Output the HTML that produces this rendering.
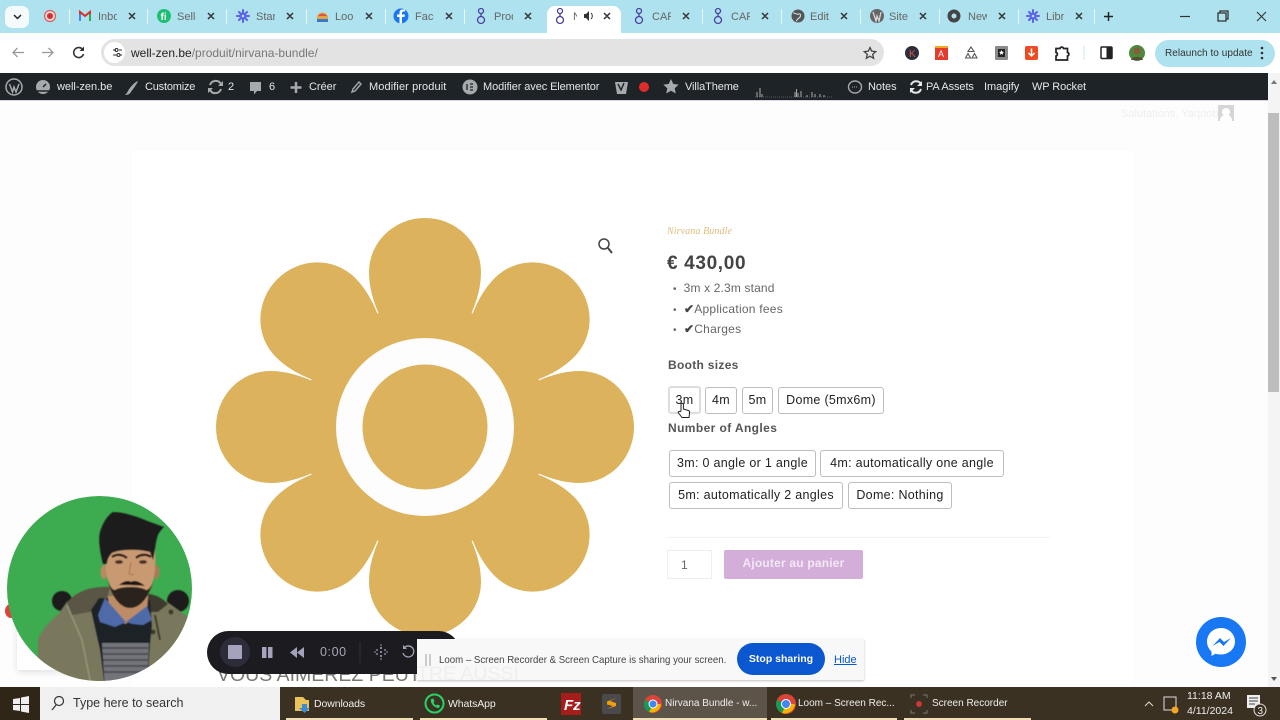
<!DOCTYPE html>
<html><head><meta charset="utf-8"><title>Nirvana Bundle</title>
<style>
html,body{margin:0;padding:0;width:1280px;height:720px;overflow:hidden;background:#fdfdfe}
body{font-family:"Liberation Sans",sans-serif;position:relative;color:#333}
.a{position:absolute;white-space:nowrap}
.t{position:absolute;top:10px;font-size:11px;color:#666;width:19px;overflow:hidden;white-space:nowrap;line-height:14px}
.sep{position:absolute;top:9px;width:1px;height:15px;background:#e8f6fa}
.ad{position:absolute;top:80px;font-size:11px;line-height:15px;color:#e6e7e8;white-space:nowrap;letter-spacing:-.03px}
.opt{position:absolute;box-sizing:border-box;border:1px solid #bdbdbd;border-radius:3px;background:#fff;font-size:12.5px;color:#222;text-align:center;white-space:nowrap;height:27px;line-height:24px;letter-spacing:.3px}
.tb{position:absolute;top:697px;font-size:10.5px;line-height:14px;color:#eee;white-space:nowrap}
.ul{position:absolute;top:718px;height:2px;background:#f0dfb4}
</style></head><body>

<!-- tab strip -->
<div class="a" style="left:0;top:0;width:1280px;height:33px;background:#aee2ee"></div>
<div class="a" style="left:5px;top:6px;width:24px;height:22px;background:#f5fbfd;border-radius:7px"></div>
<div class="a" style="left:547px;top:6px;width:74px;height:27px;background:#fff;border-radius:8px 8px 0 0"></div>
<div class="sep" style="left:69px"></div><div class="sep" style="left:147px"></div><div class="sep" style="left:226px"></div><div class="sep" style="left:306px"></div><div class="sep" style="left:385px"></div><div class="sep" style="left:464px"></div><div class="sep" style="left:702px"></div><div class="sep" style="left:781px"></div><div class="sep" style="left:860px"></div><div class="sep" style="left:939px"></div><div class="sep" style="left:1018px"></div><div class="sep" style="left:1094px"></div>
<div class="t" style="left:98px">Inbox</div><div class="t" style="left:177px">Seller</div><div class="t" style="left:256px">Start</div><div class="t" style="left:335px">Loom</div><div class="t" style="left:415px">Face</div><div class="t" style="left:494px">Prod</div><div class="t" style="left:573px;width:4px">N</div><div class="t" style="left:652px">CAR</div><div class="t" style="left:731px">CAR</div><div class="t" style="left:810px">Edit</div><div class="t" style="left:889px">Site</div><div class="t" style="left:968px">New</div><div class="t" style="left:1046px">Libr</div>

<svg class="a" style="left:0;top:0" width="1280" height="105" viewBox="0 0 1280 105">
 <path d="M14 15l3.500 3.500L21 15" fill="none" stroke="#222" stroke-width="1.500"/>
 <circle cx="50" cy="16" r="5.500" fill="#f3d6d6" stroke="#d9605c" stroke-width="1.200"/><circle cx="50" cy="16" r="3" fill="#d32f2f"/>
 <path d="M80 21V12l5 4 5-4v9" fill="none" stroke="#d93025" stroke-width="2"/><path d="M80 14v7" stroke="#4285f4" stroke-width="2"/><path d="M90 14v7" stroke="#34a853" stroke-width="2"/>
 <circle cx="164" cy="16" r="7" fill="#1dbf73"/><text x="160.500" y="20" font-size="10" font-weight="bold" fill="#fff" font-family="Liberation Sans">fi</text>
 <g stroke="#5b63e8" stroke-width="2" stroke-linecap="round"><path d="M243 10v12M237 16h12M239 12l8 8M247 12l-8 8"/></g><circle cx="243" cy="16" r="3.500" fill="#5b63e8"/><circle cx="243" cy="16" r="1.300" fill="#aee2ee"/>
 <path d="M317 22v-4a5 5 0 0 1 11 0v4z" fill="#e8a33d"/><path d="M317 22v-3h11v3z" fill="#3b78c9"/><path d="M318 16a5 4 0 0 1 9 0z" fill="#d9534f"/>
 <circle cx="401" cy="16" r="7.500" fill="#1877f2"/><path d="M402 23.400v-6.400h2.500l.5-2.500h-3V13c0-1 .5-1.500 1.500-1.500H405V9.500h-2.500c-2 0-3 1.300-3 3.200v1.800H397V17h2.500v6.400z" fill="#fff"/>
 <g fill="none" stroke="#4a3f9f" stroke-width="1.300"><circle cx="481" cy="11" r="2.500"/><circle cx="560" cy="11" r="2.500"/><circle cx="639" cy="11" r="2.500"/><circle cx="718" cy="11" r="2.500"/><path d="M481 14v3M560 14v3M639 14v3M718 14v3"/><circle cx="481" cy="20" r="3.500"/><circle cx="560" cy="20" r="3.500"/><circle cx="639" cy="20" r="3.500"/><circle cx="718" cy="20" r="3.500"/></g>
 <path d="M584 14h2l3-3v10l-3-3h-2z" fill="#333"/><path d="M591 13a4 4 0 0 1 0 6" fill="none" stroke="#333"/>
 <circle cx="798" cy="16" r="6.500" fill="#555"/><path d="M793 13c3 0 4 2 6 1s2 3 0 4-2 3-3 3" fill="none" stroke="#cfe9ef"/>
 <circle cx="877" cy="16" r="7" fill="#666"/><path d="M873 12l3 9 1-5 2 5 2-9" fill="none" stroke="#ddd" stroke-width="1.200"/>
 <circle cx="954" cy="16" r="6.500" fill="#444"/><circle cx="954" cy="16" r="2.500" fill="#aee2ee"/>
 <g stroke="#5b63e8" stroke-width="2" stroke-linecap="round"><path d="M1033 10v12M1027 16h12M1029 12l8 8M1037 12l-8 8"/></g><circle cx="1033" cy="16" r="3.500" fill="#5b63e8"/><circle cx="1033" cy="16" r="1.300" fill="#aee2ee"/>
 <path d="M1104 16.500h9M1108.500 12v9" stroke="#222" stroke-width="1.500"/>
 <path d="M1180 16.500h10" stroke="#333" stroke-width="1.200"/>
 <path d="M1218 13h8v8h-8zM1220 13v-2h8v8h-2" fill="none" stroke="#333" stroke-width="1.300"/>
 <path d="M1257 12l9 9M1266 12l-9 9" stroke="#333" stroke-width="1.100"/>
 <g stroke="#333" stroke-width="1.500"><path d="M129 13l6 6M135 13l-6 6M208 13l6 6M214 13l-6 6M287 13l6 6M293 13l-6 6M366 13l6 6M372 13l-6 6M446 13l6 6M452 13l-6 6M525 13l6 6M531 13l-6 6M604 13l6 6M610 13l-6 6M683 13l6 6M689 13l-6 6M762 13l6 6M768 13l-6 6M841 13l6 6M847 13l-6 6M920 13l6 6M926 13l-6 6M999 13l6 6M1005 13l-6 6M1076 13l6 6M1082 13l-6 6"/></g>
</svg>

<!-- toolbar -->
<div class="a" style="left:0;top:33px;width:1280px;height:40px;background:#fff"></div>
<div class="a" style="left:101px;top:39px;width:783px;height:27px;background:#e3e3e3;border-radius:14px"></div>
<div class="a" style="left:104px;top:42px;width:21px;height:21px;background:#fff;border-radius:50%"></div>
<div class="a" style="left:131px;top:46px;font-size:12px;line-height:15px;color:#777"><span style="color:#222">well-zen.be</span>/produit/nirvana-bundle/</div>
<div class="a" style="left:1155px;top:40px;width:120px;height:27px;background:#aee2ee;border-radius:14px"></div>
<div class="a" style="left:1165px;top:46px;font-size:10px;line-height:15px;color:#333;letter-spacing:.05px">Relaunch to update</div>
<svg class="a" style="left:0;top:33px" width="1280" height="40" viewBox="0 33 1280 40">
 <path d="M24 52.500H13M17.500 48l-4.500 4.500 4.500 4.500" fill="none" stroke="#999" stroke-width="1.300"/>
 <path d="M42 52.500h11M48.500 48l4.500 4.500-4.500 4.500" fill="none" stroke="#999" stroke-width="1.300"/>
 <path d="M83 50a5 5 0 1 0 .5 4" fill="none" stroke="#333" stroke-width="1.600"/><path d="M84 46.500v4.500h-4.500z" fill="#333"/>
 <g stroke="#333" stroke-width="1.100" fill="none"><path d="M113 50h3M119 50h3M113 55h4M120 55h2"/><circle cx="116.500" cy="50" r="1.500"/><circle cx="118.500" cy="55" r="1.500"/></g>
 <path d="M870 47.500l1.700 3.700 4 .4-3 2.700.9 4-3.600-2.100-3.600 2.100.9-4-3-2.700 4-.4z" fill="none" stroke="#444" stroke-width="1.300"/>
 <circle cx="912" cy="53" r="7" fill="#2c2f3a"/><text x="909" y="57" font-size="10" fill="#d9534f" font-family="Liberation Sans">K</text>
 <rect x="935" y="46" width="13" height="14" fill="#e53b2c"/><rect x="935" y="46" width="13" height="2" fill="#f5a623"/><text x="938" y="57" font-size="9" fill="#fff" font-family="Liberation Sans">A</text>
 <path d="M971 47l3 4.500h-6zM965.500 58l2.500-4.500 2.500 4.500zM977 58h-5l2.500-4.500z" fill="none" stroke="#555" stroke-width="1.100"/>
 <rect x="995" y="46" width="13" height="14" rx="1" fill="#8a8a8a"/><rect x="998" y="49" width="7" height="8" fill="#222"/><path d="M1001.500 50l.8 1.800 1.700.2-1.300 1.100.4 1.700-1.600-.9-1.600.9.400-1.700-1.300-1.100 1.700-.2z" fill="#fff"/>
 <rect x="1025" y="46" width="13" height="14" rx="2" fill="#ee4b22"/><path d="M1031.500 48.500v7M1028.500 53l3 3 3-3" fill="none" stroke="#fff" stroke-width="1.500"/>
 <path d="M1056 48.500h4a1.800 1.800 0 0 1 3.500 0h4v4a1.800 1.800 0 0 1 0 3.500v4h-11.500v-4a1.800 1.800 0 0 0 0-3.500z" fill="none" stroke="#222" stroke-width="1.700"/>
 <path d="M1084 46v14" stroke="#cfe4e8"/>
 <rect x="1101" y="47" width="11" height="11.500" rx="1" fill="#fff" stroke="#222" stroke-width="1.500"/><rect x="1106.500" y="47" width="5.500" height="11.500" fill="#222"/>
 <circle cx="1137" cy="53" r="8" fill="#4a8a3a"/><circle cx="1137" cy="51" r="3.500" fill="#8a5a3a"/><path d="M1131 60c1-4 11-4 12 0z" fill="#5a4a3a"/>
 <circle cx="1262" cy="48" r="1.300" fill="#333"/><circle cx="1262" cy="53" r="1.300" fill="#333"/><circle cx="1262" cy="58" r="1.300" fill="#333"/>
</svg>

<!-- admin bar -->
<div class="a" style="left:0;top:73px;width:1268px;height:27px;background:#1d2327"></div>
<div class="a" style="left:0;top:100px;width:1268px;height:1px;background:#d8d6e6"></div>
<div class="ad" style="left:57px">well-zen.be</div>
<div class="ad" style="left:145px;letter-spacing:-.2px">Customize</div>
<div class="ad" style="left:228px">2</div>
<div class="ad" style="left:269px">6</div>
<div class="ad" style="left:309px">Créer</div>
<div class="ad" style="left:369px;letter-spacing:.1px">Modifier produit</div>
<div class="ad" style="left:483px;letter-spacing:-.1px">Modifier avec Elementor</div>
<div class="ad" style="left:685px;letter-spacing:-.1px">VillaTheme</div>
<div class="ad" style="left:868px">Notes</div>
<div class="ad" style="left:926px;letter-spacing:-.1px">PA Assets</div>
<div class="ad" style="left:984px">Imagify</div>
<div class="ad" style="left:1032px;letter-spacing:-.1px">WP Rocket</div>
<svg class="a" style="left:0;top:74px" width="1280" height="26" viewBox="0 73 1280 26">
 <circle cx="14" cy="86" r="8" fill="none" stroke="#a7aaad" stroke-width="1.500"/><path d="M9.500 83l3 8 1.500-5 2 5 3-8" fill="none" stroke="#a7aaad" stroke-width="1.500"/>
 <circle cx="43" cy="86" r="7" fill="#a7aaad"/><path d="M43 86l3-3" stroke="#1d2327" stroke-width="1.500"/><path d="M37 90h12" stroke="#1d2327" stroke-width="1.500"/>
 <path d="M138 80c-3 1-8 6-10 10-1 2-2 3-3 4 3 0 5-1 6-3 2-3 6-8 7-11z" fill="#a7aaad"/>
 <path d="M221 83a6 6 0 0 0-11 1M210 89a6 6 0 0 0 11-1" fill="none" stroke="#a7aaad" stroke-width="2"/><path d="M223 80v5h-5zM208 92v-5h5z" fill="#a7aaad"/>
 <path d="M250 81h11v9h-4l-3 3.500V90h-4z" fill="#a7aaad"/>
 <path d="M296 81v11M290.500 86.500h11" stroke="#a7aaad" stroke-width="2.500"/>
 <path d="M352 91l1-3 6-7 2 2-6 7z" fill="none" stroke="#a7aaad" stroke-width="1.400"/>
 <circle cx="470" cy="86" r="7.500" fill="#a7aaad"/><path d="M467 83v6M470 83h3M470 86h3M470 89h3" stroke="#1d2327" stroke-width="1.300"/>
 <path d="M615 81h13l-2 12h-9z" fill="#a7aaad"/><path d="M618 83l3 6 3-7" fill="none" stroke="#1d2327" stroke-width="1.400"/>
 <circle cx="644" cy="86" r="5" fill="#e02b2b"/>
 <path d="M671 78l2.300 5 5.400.6-4 3.600 1.100 5.300-4.800-2.700-4.800 2.700 1.100-5.300-4-3.600 5.400-.6z" fill="#a7aaad"/>
 <path d="M755 96h78" stroke="#8a8f94" stroke-width=".6" stroke-dasharray="1 1"/>
 <path d="M757 96v-5M760 96v-9M762 96v-3M795 96v-5M796.500 96v-8M798 96v-4M801 96v-6M807 96v-2M812 96v-5M815 96v-3M820 96v-3M824 96v-2" stroke="#aaa" stroke-width="1"/>
 <ellipse cx="855" cy="86" rx="6.500" ry="6" fill="none" stroke="#a7aaad" stroke-width="1.400"/><path d="M852 86h6" stroke="#a7aaad" stroke-dasharray="1 1"/>
 <path d="M921 83a5.500 5.500 0 0 0-10 1M911 89a5.500 5.500 0 0 0 10-1" fill="none" stroke="#e6e7e8" stroke-width="2"/><path d="M922 80v5h-5zM910 92v-5h5z" fill="#e6e7e8"/>
</svg>

<!-- page -->
<div class="a" style="left:132px;top:150px;width:1001px;height:540px;background:#fff;box-shadow:0 0 6px rgba(0,0,0,.015)"></div>
<div class="a" style="left:1121px;top:107px;font-size:11px;line-height:14px;color:#eeeeef">Salutations, Yaqoob</div>
<div class="a" style="left:1218px;top:105px;width:16px;height:16px;background:#d6d6d6"></div>
<div class="a" style="left:1222px;top:108px;width:8px;height:8px;border-radius:50%;background:#fff"></div>
<div class="a" style="left:1220px;top:115px;width:12px;height:6px;border-radius:5px 5px 0 0;background:#fff"></div>

<svg class="a" style="left:0;top:0" width="1280" height="720" viewBox="0 0 1280 720">
 <g transform="translate(425 427)" fill="#dcb25c">
  <circle r="123"/>
  <path d="M47 -115C52 -127 56 -140 56 -155A56 54 0 0 0 -56 -155C-56 -140 -52 -127 -47 -115L0 0Z"/>
  <path transform="rotate(45)" d="M47 -115C52 -127 56 -140 56 -155A56 54 0 0 0 -56 -155C-56 -140 -52 -127 -47 -115L0 0Z"/>
  <path transform="rotate(90)" d="M47 -115C52 -127 56 -140 56 -155A56 54 0 0 0 -56 -155C-56 -140 -52 -127 -47 -115L0 0Z"/>
  <path transform="rotate(135)" d="M47 -115C52 -127 56 -140 56 -155A56 54 0 0 0 -56 -155C-56 -140 -52 -127 -47 -115L0 0Z"/>
  <path transform="rotate(180)" d="M47 -115C52 -127 56 -140 56 -155A56 54 0 0 0 -56 -155C-56 -140 -52 -127 -47 -115L0 0Z"/>
  <path transform="rotate(225)" d="M47 -115C52 -127 56 -140 56 -155A56 54 0 0 0 -56 -155C-56 -140 -52 -127 -47 -115L0 0Z"/>
  <path transform="rotate(270)" d="M47 -115C52 -127 56 -140 56 -155A56 54 0 0 0 -56 -155C-56 -140 -52 -127 -47 -115L0 0Z"/>
  <path transform="rotate(315)" d="M47 -115C52 -127 56 -140 56 -155A56 54 0 0 0 -56 -155C-56 -140 -52 -127 -47 -115L0 0Z"/>
  <circle r="89" fill="#fdfdfd"/><circle r="62.500"/>
 </g>
 <circle cx="604" cy="244" r="5" fill="none" stroke="#444" stroke-width="1.500"/><path d="M608 248l4 5" stroke="#444" stroke-width="2"/>
</svg>

<!-- product summary -->
<div class="a" style="left:667px;top:224px;font:italic 10px/16px 'Liberation Serif',serif;color:#dfbd7c;letter-spacing:.1px">Nirvana Bundle</div>
<div class="a" style="left:667px;top:253px;font-size:19px;line-height:21px;font-weight:bold;color:#444;letter-spacing:.65px">€ 430,00</div>
<div class="a" style="left:673px;top:281px;font-size:12px;line-height:15px;color:#666;letter-spacing:.15px"><span style="font-size:10px">•</span>&nbsp; 3m x 2.3m stand</div>
<div class="a" style="left:673px;top:302px;font-size:12px;line-height:15px;color:#666;letter-spacing:.25px"><span style="font-size:10px">•</span>&nbsp; <b style="color:#444">✔</b>Application fees</div>
<div class="a" style="left:673px;top:322px;font-size:12px;line-height:15px;color:#666;letter-spacing:.25px"><span style="font-size:10px">•</span>&nbsp; <b style="color:#444">✔</b>Charges</div>
<div class="a" style="left:668px;top:358px;font-size:12px;line-height:15px;font-weight:bold;color:#555;letter-spacing:.3px">Booth sizes</div>
<div class="opt" style="left:668px;top:386px;width:33px;height:28px;border:2px solid #ddd">3m</div>
<div class="opt" style="left:705px;top:387px;width:32px">4m</div>
<div class="opt" style="left:742px;top:387px;width:31px">5m</div>
<div class="opt" style="left:778px;top:387px;width:106px">Dome (5mx6m)</div>
<div class="a" style="left:668px;top:421px;font-size:12px;line-height:15px;font-weight:bold;color:#555;letter-spacing:.4px">Number of Angles</div>
<div class="opt" style="left:669px;top:450px;width:147px">3m: 0 angle or 1 angle</div>
<div class="opt" style="left:820px;top:450px;width:184px">4m: automatically one angle</div>
<div class="opt" style="left:669px;top:482px;width:174px;">5m: automatically 2 angles</div>
<div class="opt" style="left:848px;top:482px;width:104px">Dome: Nothing</div>
<div class="a" style="left:667px;top:537px;width:383px;height:1px;background:#f2f2f2"></div>
<div class="a" style="left:667px;top:550px;width:45px;height:29px;box-sizing:border-box;border:1px solid #eee;background:#fff;font-size:12px;line-height:28px;color:#666;padding-left:13px">1</div>
<div class="a" style="left:724px;top:550px;width:139px;height:29px;background:#d3aed9;border-radius:2px;color:#f3e8f5;font-size:12px;font-weight:bold;text-align:center;line-height:27px;letter-spacing:.2px">Ajouter au panier</div>
<svg class="a" style="left:677px;top:402px" width="14" height="18" viewBox="0 0 14 18"><path d="M4 9V2.500a1.200 1.200 0 0 1 2.400 0V7l5 1.500c.9.300 1.300 1 1.200 2l-.6 5H5L1.500 11c-.8-1 .5-2.200 1.500-1.300z" fill="#fff" stroke="#222" stroke-width="1"/></svg>

<!-- heading behind -->
<div class="a" style="left:217px;top:664px;width:200px;overflow:hidden;font-size:19.500px;line-height:23px;color:#777">VOUS AIMEREZ PEUT-ÊTRE AUSSI…</div>

<!-- card behind camera -->
<div class="a" style="left:17px;top:600px;width:60px;height:70px;background:#fff;box-shadow:0 2px 6px rgba(0,0,0,.12)"></div>
<div class="a" style="left:5px;top:604px;width:12px;height:14px;border-radius:50%;background:#e0413a"></div>

<!-- camera bubble -->
<svg class="a" style="left:0;top:490px" width="200" height="200" viewBox="0 490 200 200">
 <defs><clipPath id="c"><circle cx="99.500" cy="588.500" r="92.500"/></clipPath><filter id="b" x="-10%" y="-10%" width="120%" height="120%"><feGaussianBlur stdDeviation=".6"/></filter></defs>
 <g clip-path="url(#c)">
  <rect x="0" y="490" width="200" height="200" fill="#3dab4f"/>
  <g filter="url(#b)">
   <circle cx="62" cy="601" r="10" fill="#1a1c1a"/><circle cx="178" cy="601" r="11" fill="#1a1c1a"/>
   <path d="M38 690V640C42 628 52 620 60 612L67 602 84 590 110 588 150 595 167 602 188 617 190 690Z" fill="#7a785c"/>
   <path d="M67 603C75 592 90 586 110 587L106 603 90 612 72 615Z" fill="#5a5544"/>
   <path d="M147 594C155 594 162 598 168 604L158 612 150 612Z" fill="#3e3a2e"/>
   <path d="M67 605L82 640 92 690" fill="none" stroke="#96947a" stroke-width="1.500"/>
   <path d="M155 615L160 640" fill="none" stroke="#3c3a2c" stroke-width="2"/>
   <circle cx="171" cy="612" r="2.500" fill="#3c3a2c"/><circle cx="153" cy="632" r="2.500" fill="#3c3a2c"/>
   <path d="M91 610L99 598 150 600 152 625 150 645 147 690 105 690 100 650Z" fill="#1e2226"/>
   <path d="M102 643H149L147 690H105Z" fill="#73737a"/>
   <path d="M102 648h47M103 654h46M103 660h45M104 666h44M104 672h44" stroke="#4a4a52" stroke-width="1.800"/>
   <path d="M108 596H148L147 612 125 624 109 608Z" fill="#bd8c66"/>
   <path d="M105 598L98 615 100 622 115 627 126 622 110 604Z" fill="#4f6ba8"/>
   <path d="M147 606L152 620 143 625 133 624 126 622Z" fill="#4f6ba8"/>
   <ellipse cx="104" cy="572" rx="3.500" ry="7" fill="#b98a62"/><ellipse cx="156.500" cy="572" rx="3" ry="7" fill="#a87a58"/>
   <path d="M106 550C104 570 108 590 118 601 126 609 136 609 144 601 152 592 157 572 155 550 142 540 118 540 106 550Z" fill="#c99a72"/>
   <path d="M108 580C111 596 120 608 130 608 141 608 150 596 154 578 152 586 149 590 146 590 140 586 121 586 115 590 112 590 110 586 108 580Z" fill="#2b211c"/>
   <path d="M119 585C124 581 128 580 131 582 134 580 139 581 145 586 138 585 125 585 119 585Z" fill="#1a1512"/>
   <path d="M112 557C116 554 122 554 127 558M136 558C140 554 147 554 151 557" stroke="#2a1f1a" stroke-width="2.400" fill="none"/>
   <ellipse cx="119" cy="562" rx="4" ry="1.900" fill="#4a3228"/><ellipse cx="143" cy="562" rx="4" ry="1.900" fill="#4a3228"/>
   <path d="M131 562L129 574 134 575" fill="none" stroke="#a87a58" stroke-width="1.100"/>
   <path d="M103 564C100 552 98 540 100 532 103 522 108 515 113 512 122 512 132 515 140 518L150 522 164 527C160 531 158 534 157 538 155 545 155 552 153 560L150 552C140 549 120 549 112 553 109 556 107 560 107 564Z" fill="#1d1b1d"/>
  </g>
 </g>
</svg>

<!-- loom control -->
<div class="a" style="left:207px;top:631px;width:253px;height:43px;background:#1b1b20;border-radius:22px"></div>
<div class="a" style="left:220px;top:637px;width:30px;height:30px;background:#2d2d3a;border-radius:50%"></div>
<div class="a" style="left:228px;top:645px;width:14px;height:14px;background:#a5a3bc;border-radius:1px"></div>
<div class="a" style="left:320px;top:645px;font-size:12.500px;line-height:15px;color:#a9a7b5;letter-spacing:.6px">0:00</div>
<svg class="a" style="left:200px;top:630px" width="230" height="45" viewBox="200 630 230 45">
 <path d="M262 647h4.500v11H262zM268 647h4.500v11H268z" fill="#a5a3bc"/>
 <path d="M297 647v11l-7-5.500zM304 647v11l-7-5.500z" fill="#a5a3bc"/>
 <path d="M360 642v21" stroke="#333"/>
 <g fill="#a5a3bc"><circle cx="381" cy="648" r="1"/><circle cx="381" cy="652" r="1"/><circle cx="381" cy="656" r="1"/><circle cx="377" cy="650" r=".9"/><circle cx="377" cy="654" r=".9"/><circle cx="385" cy="650" r=".9"/><circle cx="385" cy="654" r=".9"/><circle cx="375" cy="652" r=".8"/><circle cx="387" cy="652" r=".8"/><circle cx="381" cy="645" r=".8"/><circle cx="381" cy="659" r=".8"/></g>
 <path d="M404 648a5.500 5.500 0 1 1-1 5" fill="none" stroke="#a5a3bc" stroke-width="1.300"/><path d="M403 645v4h4z" fill="#a5a3bc"/>
</svg>

<!-- sharing bar -->
<div class="a" style="left:417px;top:639px;width:447px;height:41px;background:#f8f8f8;box-shadow:0 1px 2px rgba(0,0,0,.25)"></div>
<div class="a" style="left:417px;top:665px;width:108px;height:19px;overflow:hidden;font-size:19.500px;line-height:18px;color:#efefef">TRE AUSSI</div>
<div class="a" style="left:425px;top:654px;width:2px;height:12px;background:#ccc"></div><div class="a" style="left:429px;top:654px;width:2px;height:12px;background:#ccc"></div>
<div class="a" style="left:439px;top:653px;font-size:10.500px;line-height:14px;color:#444;transform-origin:0 50%;transform:scaleX(.92)">Loom – Screen Recorder &amp; Screen Capture is sharing your screen.</div>
<div class="a" style="left:737px;top:643px;width:88px;height:32px;background:#0b57d0;border-radius:16px;color:#fff;font-size:10.500px;font-weight:bold;text-align:center;line-height:32px">Stop sharing</div>
<div class="a" style="left:834px;top:653px;font-size:11px;line-height:14px;color:#0b57d0;text-decoration:underline">Hide</div>

<!-- messenger -->
<svg class="a" style="left:1195px;top:616px" width="52" height="52" viewBox="0 0 52 52">
 <circle cx="26" cy="26" r="25" fill="#1877f2"/>
 <path d="M26 12c-8 0-14 6-14 13.500 0 4 1.700 7.500 4.500 10V40l4-2.200c1.700.5 3.500.7 5.500.7 8 0 14-5.800 14-13S34 12 26 12z" fill="#fff"/>
 <path d="M17.500 30l7.500-8 4 4 7-4-7.500 8-4-4z" fill="#1877f2"/>
</svg>

<!-- scrollbar -->
<div class="a" style="left:1268px;top:73px;width:12px;height:614px;background:#f4f4f4"></div>
<div class="a" style="left:1268px;top:113px;width:11px;height:279px;background:#bdbdbd"></div>
<svg class="a" style="left:1268px;top:73px" width="12" height="614"><path d="M3 11l3-4 3 4z" fill="#777"/><path d="M3 604l3 4 3-4z" fill="#555"/></svg>

<!-- taskbar -->
<div class="a" style="left:0;top:687px;width:1280px;height:33px;background:#3b3122"></div>
<div class="a" style="left:0;top:687px;width:40px;height:33px;background:#2f2618"></div>
<div class="a" style="left:40px;top:687px;width:240px;height:33px;background:#f0f0f0"></div>
<div class="a" style="left:73px;top:696px;font-size:12.500px;line-height:15px;color:#333">Type here to search</div>
<div class="a" style="left:633px;top:687px;width:134px;height:33px;background:#5c5448"></div>
<div class="ul" style="left:286px;width:127px"></div><div class="ul" style="left:420px;width:127px"></div><div class="ul" style="left:633px;width:134px"></div><div class="ul" style="left:771px;width:126px"></div><div class="ul" style="left:904px;width:127px"></div>
<div class="tb" style="left:314px;letter-spacing:-.1px">Downloads</div>
<div class="tb" style="left:448px;letter-spacing:-.1px">WhatsApp</div>
<div class="tb" style="left:665px;font-size:10px">Nirvana Bundle - w...</div>
<div class="tb" style="left:798px;font-size:10px">Loom – Screen Rec...</div>
<div class="tb" style="left:932px;font-size:10px">Screen Recorder</div>
<div class="tb" style="left:1187px;top:689px;width:40px;text-align:center;font-size:10.500px">11:18 AM</div>
<div class="tb" style="left:1187px;top:704px;width:40px;text-align:center;font-size:10.500px">4/11/2024</div>
<svg class="a" style="left:0;top:687px" width="1280" height="33" viewBox="0 687 1280 33">
 <path d="M13 699l7-1v6h-7zM21 697.500l8-1.500v8h-8zM13 705h7v6l-7-1zM21 705h8v8l-8-1.500z" fill="#eee"/>
 <circle cx="59" cy="701" r="4.500" fill="none" stroke="#333" stroke-width="1.200"/><path d="M56 705l-4 5" stroke="#333" stroke-width="1.200"/>
 <path d="M295 697h8l3 3h3v11h-14z" fill="#e8c25a"/><path d="M302 704h5v4h3l-5.500 5-5.500-5h3z" fill="#3a8ad6"/>
 <circle cx="434.500" cy="703.500" r="9" fill="none" stroke="#25d366" stroke-width="2"/><path d="M431 699c-1 4 3 9 8 9l1-2.500-3-1-1 1c-1-.5-2-2-2.500-3l1-1-1-3z" fill="#25d366"/>
 <rect x="561" y="693" width="20" height="22" rx="1" fill="#a81c1c"/><text x="564" y="710" font-size="15" font-weight="bold" font-style="italic" fill="#fff" font-family="Liberation Sans">Fz</text>
 <rect x="602" y="694" width="19" height="20" rx="2" fill="#4a4a4a"/><path d="M616 698l-9 3.500v3l6 1.500-6 3 9-3v-3l-6-2z" fill="#f59e0b"/>
 <circle cx="653" cy="704" r="9" fill="#db4437"/><path d="M653 704l8 0a9 9 0 0 1-12 8z" fill="#f4b400"/><path d="M653 704l-4 8a9 9 0 0 1-4-12z" fill="#0f9d58"/><circle cx="653" cy="704" r="4" fill="#4285f4" stroke="#fff"/>
 <circle cx="786" cy="704" r="10" fill="#db4437"/><path d="M786 704l9 0a10 10 0 0 1-13 9z" fill="#f4b400"/><path d="M786 704l-4 9a10 10 0 0 1-5-13z" fill="#0f9d58"/><circle cx="786" cy="704" r="4.500" fill="#4285f4" stroke="#fff"/>
 <path d="M911 698v-3h4M923 695h4v3M927 710v3h-4M915 713h-4v-3" fill="none" stroke="#777"/><circle cx="919" cy="704" r="3" fill="#c53a3a"/>
 <path d="M1145 706l4-4 4 4" fill="none" stroke="#ddd"/>
 <rect x="1164" y="697" width="12" height="13" fill="none" stroke="#ddd"/><circle cx="1175" cy="710" r="3.500" fill="#f5a623"/>
 <path d="M1247 695h13v13h-13z" fill="#eee"/><path d="M1249 698h9M1249 701h9M1249 704h6" stroke="#444"/>
 <circle cx="1260" cy="710" r="6" fill="#3b3122" stroke="#ddd"/>
 <text x="1257.500" y="714" font-size="10" fill="#eee" font-family="Liberation Sans">3</text>
</svg>
</body></html>
